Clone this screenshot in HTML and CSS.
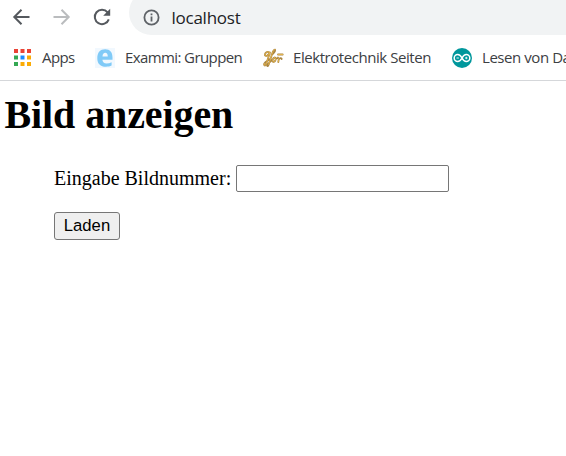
FILE: index.html
```html
<!DOCTYPE html>
<html lang="de">
<head>
<meta charset="utf-8">
<title>Bild anzeigen</title>
<link rel="stylesheet" href="styles.css">
</head>
<body>
<header class="browser">
  <div class="toolbar">
    <nav class="nav">
      <svg class="nav-icon" viewBox="0 0 20 20"><path d="M17.500 10H2.500M9.500 2.800L2.300 10l7.200 7.200"/></svg>
      <svg class="nav-icon disabled" viewBox="0 0 20 20"><path d="M1.500 10h15M9.500 2.800l7.200 7.200-7.200 7.200"/></svg>
      <svg class="nav-icon" viewBox="0 0 20 20"><path d="M16.800 12.300A7.200 7.200 0 1 1 15.600 5.400"/><path class="solid" d="M18.200 1.700v7h-7z"/></svg>
    </nav>
    <div class="address">
      <svg class="info" viewBox="0 0 17 17"><circle cx="8.5" cy="8.5" r="7.1"/><path d="M8.5 7.600v4.800M8.500 4.500v1.800"/></svg>
      <span class="url">localhost</span>
    </div>
  </div>
  <div class="bookmarks">
    <a class="bookmark apps">
      <svg viewBox="0 0 17 17" width="17" height="17">
        <path fill="#ea4335" d="M0 0h4v4H0zM6.500 0h4v4h-4zM13 0h4v4h-4z"/>
        <path fill="#34a853" d="M0 6.500h4v4H0zM0 13h4v4H0z"/>
        <path fill="#1a8cff" d="M6.500 6.500h4v4h-4z"/>
        <path fill="#fbab05" d="M13 6.500h4v4h-4zM6.500 13h4v4h-4zM13 13h4v4h-4z"/>
      </svg>
      <span>Apps</span>
    </a>
    <a class="bookmark exammi">
      <svg viewBox="0 0 20 20" width="20" height="20">
        <rect width="20" height="20" fill="#f1f8fe"/>
        <path fill="#80caf7" fill-rule="evenodd" d="M17.500 11.800H7.400C7.600 14.300 9 15.400 11.600 15.400C13.400 15.400 15 15 16.600 14.200V17.600C15 18.400 13.200 18.800 11 18.800C5.400 18.800 2.300 15.700 2.300 10.200C2.300 4.600 5.200 1.300 10.200 1.300C15 1.300 17.500 4.300 17.500 9.600zM7.500 8.500H12.800C12.700 6 11.900 4.800 10.300 4.800C8.600 4.800 7.700 6 7.500 8.500z"/>
      </svg>
      <span>Exammi: Gruppen</span>
    </a>
    <a class="bookmark elektro">
      <svg viewBox="0 0 21 20" width="21" height="20" fill="none" stroke-linecap="round" stroke-linejoin="round">
        <path stroke="#a98543" stroke-width="1.800" d="M6.500 4.500C4 2.800 1.600 5 2 7.300C3 9 5.500 7 7 4.500L3.200 16C2.300 18.500 .6 17.500 1.300 15.500C2 13.500 5 12.500 7.500 10.800M8.500 7C10.500 5.500 12.500 3 12 1.600C10.500 1 9.300 5 8 9.500L5.700 16.500C5 19 3.800 18.500 4.600 16.500C6 14.500 8.500 13 10 11M11.800 9.500C9.500 10 8.800 13.500 10.500 14C12.700 14 13.500 9.700 11.800 9.500C12.300 11 13.800 11 15 9.500C16 10 16 10.500 15.300 14M15.700 11.500C17 9.800 18.500 9.700 18.700 11M15 6.500h4.700"/>
        <path stroke="#efbd4e" stroke-width=".8" d="M6.500 4.500C4 2.800 1.600 5 2 7.300C3 9 5.500 7 7 4.500L3.200 16C2.300 18.500 .6 17.500 1.300 15.500M12 1.600C10.500 1 9.300 5 8 9.500L5.700 16.500M11.800 9.500C9.500 10 8.800 13.500 10.500 14C12.700 14 13.500 9.700 11.800 9.500M15 9.500C16 10 16 10.500 15.300 14M15 6.500h4.700"/>
      </svg>
      <span>Elektrotechnik Seiten</span>
    </a>
    <a class="bookmark arduino">
      <svg viewBox="0 0 20 20" width="20" height="20" fill="none" stroke="#fff">
        <circle cx="10" cy="10" r="10" fill="#00979c" stroke="none"/>
        <path stroke-width="1.500" d="M10 10C8.700 7.500 7.400 6.500 5.700 6.500a3.500 3.500 0 0 0 0 7C7.400 13.500 8.700 12.500 10 10C11.300 7.500 12.600 6.500 14.300 6.500a3.500 3.500 0 0 1 0 7C12.600 13.500 11.300 12.500 10 10z"/>
        <path stroke-width=".9" d="M4.500 10h2.400M13.100 10h2.400M14.300 8.800v2.400"/>
      </svg>
      <span>Lesen von Daten</span>
    </a>
  </div>
</header>
<main class="page">
  <h1>Bild anzeigen</h1>
  <form class="form">
    <div class="field"><label for="number">Eingabe Bildnummer:</label><input id="number" type="text"></div>
    <button type="button">Laden</button>
  </form>
</main>
</body>
</html>
```
FILE: styles.css
```css
* { box-sizing: border-box; }
body {
  margin: 0;
  height: 456px;
  overflow: hidden;
  background: #fff;
  color: #000;
  font: 20px "Liberation Serif", serif;
}
.browser {
  height: 81px;
  overflow: hidden;
  border-bottom: 1px solid #d5d7da;
  font-family: "Open Sans", "Noto Sans", sans-serif;
  color: #3c4043;
}
.toolbar { display: flex; height: 35px; }
.nav { display: flex; flex: none; width: 129px; padding: 7px 0 0 12px; gap: 20px; }
.nav-icon { width: 20px; height: 20px; flex: none; fill: none; stroke: #55595e; stroke-width: 2; }
.nav-icon.disabled { stroke: #babcbe; }
.nav-icon .solid { fill: #55595e; stroke: none; }
.address {
  display: flex;
  flex: 1;
  align-items: center;
  height: 45px;
  margin-top: -10px;
  padding: 10px 0 0 14px;
  background: #f1f3f4;
  border-radius: 23px 0 0 23px;
}
.info { width: 17px; height: 17px; margin-right: 11.5px; fill: none; stroke: #5f6368; stroke-width: 1.8; }
.url { font-size: 17px; line-height: 24px; color: #202124; letter-spacing: -0.25px; }
.bookmarks { display: flex; height: 45px; align-items: center; padding-left: 14px; white-space: nowrap; }
.bookmark { display: flex; flex: none; align-items: center; font-size: 15px; letter-spacing: -0.44px; }
.bookmark svg { flex: none; }
.bookmark span { line-height: 20px; padding-bottom: 2px; }
.apps { width: 81px; gap: 11px; }
.apps span { letter-spacing: -0.6px; }
.exammi { width: 168px; gap: 10px; }
.exammi span { letter-spacing: -0.6px; }
.elektro { width: 189px; gap: 9px; }
.arduino { gap: 10px; }
.page { padding: 11px 5px 0 4.5px; }
h1 { margin: 0; font-size: 40px; line-height: 46px; letter-spacing: -0.1px; }
.form { padding: 27px 0 0 49.5px; }
.field { display: flex; align-items: center; height: 27px; }
label { line-height: 23px; margin-right: 5px; }
input { width: 213px; height: 27px; padding: 1px 3px; border: 1px solid #767676; border-radius: 2px; background: #fff; }
button {
  display: block;
  width: 66px;
  height: 28px;
  margin-top: 20px;
  padding: 0;
  border: 1px solid #767676;
  border-radius: 3px;
  background: #efefef;
  color: #000;
  font: 16.667px "Liberation Sans", sans-serif;
}
```
